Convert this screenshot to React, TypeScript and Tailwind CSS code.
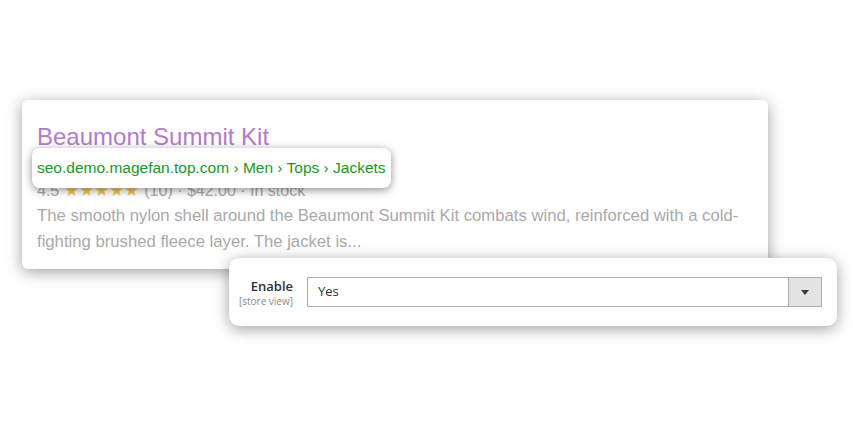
const SERP_FONT = "font-['Liberation_Sans',Arial,sans-serif]";

function Stars() {
  return <span className="text-[17px] text-[#f3c75a]">★★★★★</span>;
}

function SearchResultCard() {
  return (
    <div
      className={`absolute left-[22px] top-[100px] w-[746px] h-[169px] rounded-md bg-white px-[15px] pt-[24px] shadow-[0_3px_15px_rgba(0,0,0,0.38)] ${SERP_FONT}`}
    >
      <div className="text-[24px] leading-[26px] text-[#b27bcb]">
        Beaumont Summit Kit
      </div>
      {/* url line sits under the zoomed breadcrumb pill */}
      <div className="h-[30px]" />
      <div className="flex items-center gap-[5px] h-[22px] text-[16px] text-[#ababab]">
        <span>4.5</span>
        <Stars />
        <span>(10) · $42.00 · In stock</span>
      </div>
      <p className="mt-[1px] text-[16.7px] leading-[26px] text-[#a9a9a9]">
        The smooth nylon shell around the Beaumont Summit Kit combats wind,
        reinforced with a cold-fighting brushed fleece layer. The jacket is...
      </p>
    </div>
  );
}

function BreadcrumbPill() {
  return (
    <div
      className={`absolute left-[32px] top-[148px] w-[359px] h-[40px] flex items-center pl-[5px] rounded-lg bg-white shadow-[0_2px_9px_rgba(0,0,0,0.45)] text-[15.5px] text-[#179a25] ${SERP_FONT}`}
    >
      seo.demo.magefan.top.com › Men › Tops › Jackets
    </div>
  );
}

function EnableCard() {
  return (
    <div className="absolute left-[229px] top-[258px] w-[608px] h-[68px] flex items-center rounded-[10px] bg-white shadow-[0_3px_15px_rgba(0,0,0,0.38)] font-['Open_Sans',sans-serif]">
      <div className="w-[64px] flex flex-col items-end">
        <span className="text-[13px] leading-[17px] font-semibold text-[#303030]">
          Enable
        </span>
        <span className="text-[10px] leading-[12px] text-[#8a8a8a]">
          [store view]
        </span>
      </div>
      <div className="ml-[14px] w-[515px] h-[30px] flex border border-[#adadad] bg-white">
        <div className="flex-1 flex items-center pl-[10px] text-[13px] text-[#303030]">
          Yes
        </div>
        <div className="w-[33px] flex items-center justify-center bg-[#e3e3e3] border-l border-[#adadad]">
          <svg width="8" height="5" viewBox="0 0 8 5">
            <path d="M0 0 L8 0 L4 5 Z" fill="#3a3a3a" />
          </svg>
        </div>
      </div>
    </div>
  );
}

export default function App() {
  return (
    <div className="relative w-[853px] h-[425px] bg-white overflow-hidden">
      <SearchResultCard />
      <BreadcrumbPill />
      <EnableCard />
    </div>
  );
}
